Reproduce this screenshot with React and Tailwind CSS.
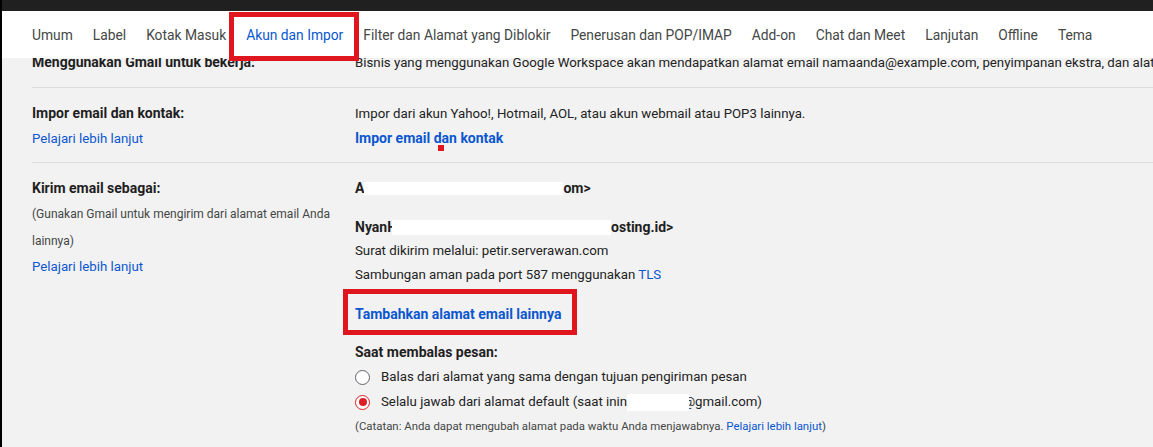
import React from "react";

const tabs = [
  "Umum",
  "Label",
  "Kotak Masuk",
  "Akun dan Impor",
  "Filter dan Alamat yang Diblokir",
  "Penerusan dan POP/IMAP",
  "Add-on",
  "Chat dan Meet",
  "Lanjutan",
  "Offline",
  "Tema",
];

function Radio({ checked }) {
  return checked ? (
    <span className="flex h-[15px] w-[15px] shrink-0 items-center justify-center rounded-full border-[1.5px] border-[#dc1f26] bg-white">
      <span className="h-[8px] w-[8px] rounded-full bg-[#dc1f26]" />
    </span>
  ) : (
    <span className="h-[15px] w-[15px] shrink-0 rounded-full border-[1.5px] border-[#5f6368] bg-white" />
  );
}

export default function App() {
  return (
    <div
      className="relative h-[447px] w-[1153px] overflow-hidden bg-[#f2f2f2] text-[13.25px] text-[#1f1f1f]"
      style={{ fontFamily: "Roboto, 'Liberation Sans', sans-serif" }}
    >
      <div className="absolute left-0 top-0 z-20 h-full w-[2px] bg-black" />
      <div className="h-[11px] bg-[#202020]" />
      {/* Tab bar */}
      <div className="relative z-10 flex h-[47px] gap-[20px] bg-white pl-[32px] text-[13.8px] whitespace-nowrap">
        {tabs.map((t) => (
          <div key={t} className="relative flex h-full items-center pt-[2px]">
            <span className={t === "Akun dan Impor" ? "text-[#0b57d0]" : "text-[#444746]"}>{t}</span>
            {t === "Akun dan Impor" && (
              <div className="pointer-events-none absolute left-[-17px] top-[1px] h-[49px] w-[130px] border-[5px] border-[#e0161e]" />
            )}
          </div>
        ))}
      </div>

      {/* Content */}
      <div className="overflow-hidden">
        {/* Row 1 (scrolled) */}
        <div className="mt-[-8px] flex whitespace-nowrap pb-[12px] pl-[32px]">
          <div className="w-[323px] shrink-0 text-[14px] font-bold leading-[25px]">Menggunakan Gmail untuk bekerja:</div>
          <div className="leading-[25px] text-[#222]">
            Bisnis yang menggunakan Google Workspace akan mendapatkan alamat email namaanda@example.com, penyimpanan ekstra, dan alat admin.
          </div>
        </div>

        {/* Row 2 */}
        <div className="ml-[32px] flex border-t border-[#dadce0] pb-[11px] pt-[13px]">
          <div className="w-[323px] shrink-0">
            <div className="text-[14px] font-bold leading-[25px]">Impor email dan kontak:</div>
            <div className="leading-[25px] text-[#0b57d0]">Pelajari lebih lanjut</div>
          </div>
          <div>
            <div className="leading-[25px] text-[#222]">
              Impor dari akun Yahoo!, Hotmail, AOL, atau akun webmail atau POP3 lainnya.
            </div>
            <div className="relative text-[14px] font-bold leading-[25px] text-[#0b57d0]">
              Impor email dan kontak
              <span className="absolute left-[83px] top-[19px] h-[6px] w-[6px] bg-[#e0161e]" />
            </div>
          </div>
        </div>

        {/* Row 3 */}
        <div className="ml-[32px] flex border-t border-[#dadce0] pt-[13px]">
          <div className="w-[323px] shrink-0 pr-[25px]">
            <div className="text-[14px] font-bold leading-[25px]">Kirim email sebagai:</div>
            <div className="text-[12px] leading-[26.5px] text-[#444746]">
              (Gunakan Gmail untuk mengirim dari alamat email Anda lainnya)
            </div>
            <div className="leading-[25px] text-[#0b57d0]">Pelajari lebih lanjut</div>
          </div>
          <div className="whitespace-nowrap">
            <div className="flex items-center text-[14px] font-bold leading-[25px]">
              <span>A</span>
              <span className="h-[13px] w-[199px] bg-white" />
              <span>om&gt;</span>
            </div>
            <div className="mt-[14px] flex items-center text-[14px] font-bold leading-[24px]">
              <span>NyanH</span>
              <span className="relative z-10 ml-[-5px] h-[15px] w-[219px] bg-white" />
              <span>osting.id&gt;</span>
            </div>
            <div className="leading-[24px] text-[#222]">Surat dikirim melalui: petir.serverawan.com</div>
            <div className="leading-[24px] text-[#222]">
              Sambungan aman pada port 587 menggunakan <span className="text-[#0b57d0]">TLS</span>
            </div>
            <div className="relative mt-[15px] text-[14px] font-bold leading-[24px] text-[#0b57d0]">
              Tambahkan alamat email lainnya
              <div className="pointer-events-none absolute left-[-12px] top-[-13px] h-[46px] w-[234px] border-[5px] border-[#e0161e]" />
            </div>
            <div className="mt-[14px] text-[14px] font-bold leading-[24px]">Saat membalas pesan:</div>
            <div className="mt-[1px] flex h-[24px] items-center gap-[11px] text-[#222]">
              <Radio checked={false} />
              <span>Balas dari alamat yang sama dengan tujuan pengiriman pesan</span>
            </div>
            <div className="mt-[1px] flex h-[24px] items-center gap-[11px] text-[#222]">
              <Radio checked />
              <span className="flex items-center">
                <span>Selalu jawab dari alamat default (saat inin</span>
                <span className="relative z-10 h-[17px] w-[62px] bg-white" />
                <span className="ml-[-6px]">@gmail.com)</span>
              </span>
            </div>
            <div className="text-[11.4px] leading-[24px] text-[#444746]">
              (Catatan: Anda dapat mengubah alamat pada waktu Anda menjawabnya.{" "}
              <span className="text-[#0b57d0]">Pelajari lebih lanjut</span>)
            </div>
          </div>
        </div>
      </div>
    </div>
  );
}
